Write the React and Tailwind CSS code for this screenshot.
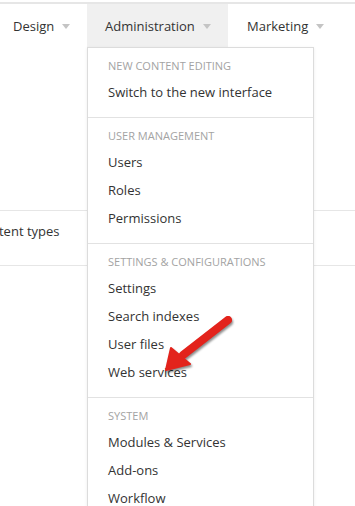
import React from 'react';

const sections = [
  { title: 'New content editing', items: ['Switch to the new interface'] },
  { title: 'User management', items: ['Users', 'Roles', 'Permissions'] },
  { title: 'Settings & configurations', items: ['Settings', 'Search indexes', 'User files', 'Web services'] },
  { title: 'System', items: ['Modules & Services', 'Add-ons', 'Workflow'] },
];

const Caret = () => (
  <span className="ml-[8px] inline-block w-0 h-0 border-l-[4px] border-r-[4px] border-t-[5px] border-l-transparent border-r-transparent border-t-[#c4c4c4]" />
);

export default function App() {
  return (
    <div className="relative w-[355px] h-[506px] overflow-hidden bg-white text-[13px] text-[#333]" style={{ fontFamily: '"Open Sans", "Noto Sans", sans-serif' }}>
      {/* top edge */}
      <div className="mt-[2px] h-[2px] bg-[#e6e6e6]" />

      {/* nav */}
      <nav className="flex h-[43px] items-center">
        <div className="flex h-full w-[87px] items-center pl-[13px] pt-[2px]">
          Design <Caret />
        </div>
        <div className="flex h-full w-[141px] items-center bg-[#f0f0f0] pl-[18px] pt-[2px]">
          Administration <Caret />
        </div>
        <div className="flex h-full items-center pl-[19px] pt-[2px]">
          Marketing <Caret />
        </div>
      </nav>

      {/* page content behind the menu */}
      <div className="mt-[163px] h-[56px] border-y border-[#e6e6e6] pt-[11px] leading-[18px]">
        <span className="ml-[-25px]">Content types</span>
      </div>

      {/* dropdown */}
      <div className="absolute left-[87px] top-[47px] w-[227px] border border-[#dcdcdc] bg-white shadow-[0_1px_3px_rgba(0,0,0,0.08)]">
        {sections.map((s, i) => (
          <div key={s.title} className={`pt-[10px] pb-[11px] ${i > 0 ? 'border-t border-[#e2e2e2]' : ''}`}>
            <div className="h-[16px] pl-[20px] text-[11px] leading-[16px] uppercase text-[#a3a3a3]">{s.title}</div>
            <div className="mt-[4px]">
              {s.items.map((item) => (
                <div key={item} className="h-[28px] pl-[20px] leading-[28px]">{item}</div>
              ))}
            </div>
          </div>
        ))}
      </div>

      {/* red arrow annotation */}
      <svg className="pointer-events-none absolute left-0 top-0 drop-shadow-[1px_2px_1px_rgba(0,0,0,0.45)]" width="355" height="506">
        <line x1="228" y1="320" x2="183" y2="355" stroke="#e3231c" strokeWidth="8" strokeLinecap="round" />
        <polygon points="166,370 171,348 190,364" fill="#e3231c" stroke="#e3231c" strokeWidth="2" strokeLinejoin="round" />
      </svg>
    </div>
  );
}
